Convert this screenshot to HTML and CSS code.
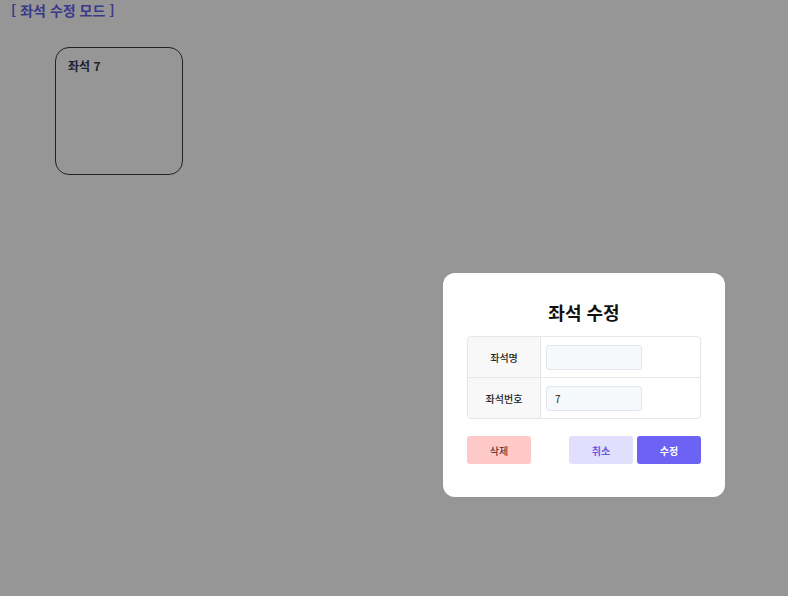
FILE: index.html
```html
<!DOCTYPE html>
<html lang="ko">
<head>
<meta charset="utf-8">
<link rel="stylesheet" href="styles.css">
</head>
<body>
<div class="page">
  <h1 class="mode-title">[ 좌석 수정 모드 ]</h1>
  <div class="seat-area">
    <div class="seat-card"><span class="seat-name">좌석 7</span></div>
  </div>
</div>
<div class="overlay">
  <div class="modal">
    <h2 class="modal-title">좌석 수정</h2>
    <div class="form-table">
      <div class="form-row">
        <div class="form-label">좌석명</div>
        <div class="form-cell"><input class="form-input" type="text" value=""></div>
      </div>
      <div class="form-row">
        <div class="form-label">좌석번호</div>
        <div class="form-cell"><input class="form-input" type="text" value="7"></div>
      </div>
    </div>
    <div class="modal-actions">
      <button class="btn btn-delete">삭제</button>
      <div class="actions-right">
        <button class="btn btn-cancel">취소</button>
        <button class="btn btn-save">수정</button>
      </div>
    </div>
  </div>
</div>
</body>
</html>
```
FILE: styles.css
```css
html, body {
  margin: 0;
  padding: 0;
  background: #ffffff;
  font-family: "Noto Sans CJK KR", "Noto Sans", sans-serif;
}
.page {
  padding: 0 11px;
}
.mode-title {
  margin: 0;
  font-size: 14px;
  line-height: 20px;
  font-weight: 700;
  color: #6562ea;
}
.seat-area {
  padding: 27px 0 0 44px;
}
.seat-card {
  width: 128px;
  height: 128px;
  box-sizing: border-box;
  border: 1px solid #3a3a3a;
  border-radius: 14px;
  padding: 4px 12px;
}
.seat-name {
  font-size: 12px;
  font-weight: 700;
  color: #3a3550;
  line-height: 16px;
}
.overlay {
  position: fixed;
  inset: 0;
  background: rgba(0, 0, 0, 0.41);
  padding: 273px 0 0 443px;
  box-sizing: border-box;
}
.modal {
  width: 282px;
  height: 224px;
  background: #ffffff;
  border-radius: 12px;
  box-sizing: border-box;
  padding: 26px 24px 0 24px;
}
.modal-title {
  margin: 0 0 11px;
  text-align: center;
  font-size: 18px;
  line-height: 26px;
  font-weight: 700;
  color: #111;
}
.form-table {
  border: 1px solid #e6e6e6;
  border-radius: 4px;
  overflow: hidden;
}
.form-row {
  display: flex;
  height: 40px;
}
.form-row + .form-row {
  border-top: 1px solid #e6e6e6;
}
.form-label {
  width: 72px;
  background: #f8f8f8;
  border-right: 1px solid #e6e6e6;
  display: flex;
  align-items: center;
  justify-content: center;
  font-size: 10px;
  font-weight: 500;
  color: #222;
}
.form-cell {
  flex: 1;
  display: flex;
  align-items: center;
  padding-left: 5px;
}
.form-input {
  width: 96px;
  height: 25px;
  box-sizing: border-box;
  border: 1px solid #e2e6ec;
  border-radius: 3px;
  background: #f6f9fc;
  padding: 0 8px;
  font-family: inherit;
  font-size: 10px;
  color: #222;
  outline: none;
}
.modal-actions {
  display: flex;
  justify-content: space-between;
  margin-top: 17px;
}
.actions-right {
  display: flex;
  gap: 4px;
}
.btn {
  width: 64px;
  height: 28px;
  border: none;
  border-radius: 3px;
  font-family: inherit;
  font-size: 10px;
  padding: 0;
}
.btn-delete {
  background: #ffc9c9;
  color: #3a2020;
  font-weight: 400;
}
.btn-cancel {
  background: #e2dffc;
  color: #6a5ce0;
  font-weight: 600;
}
.btn-save {
  background: #6c63f5;
  color: #ffffff;
  font-weight: 700;
}
```
